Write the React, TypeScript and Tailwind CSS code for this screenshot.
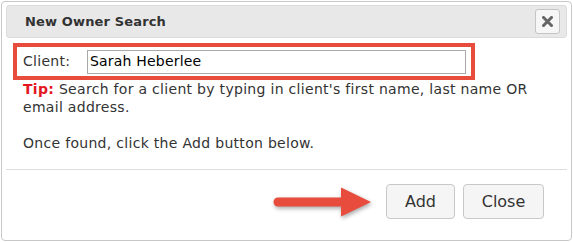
import React from "react";

export default function App() {
  return (
    <div
      className="w-[573px] h-[242px] bg-white p-[1px]"
      style={{ fontFamily: '"DejaVu Sans", Verdana, sans-serif' }}
    >
      <div className="h-[240px] border border-[#c8c8c8] rounded-[4px] flex flex-col pt-[3px] px-[4px] bg-white">
        {/* header */}
        <div className="h-[33px] shrink-0 bg-[#e8e8e8] border border-[#dcdcdc] rounded-[3px] flex items-center justify-between pl-[18px] pr-[6px]">
          <span className="text-[13px] font-bold text-[#333] tracking-[0.15px] pt-[1px]">New Owner Search</span>
          <button className="w-[25px] h-[25px] bg-[#f6f6f6] border border-[#c5c5c5] rounded-[3px] flex items-center justify-center">
            <svg width="11" height="11" viewBox="0 0 11 11">
              <path d="M1.5 1.5 L9.5 9.5 M9.5 1.5 L1.5 9.5" stroke="#666" strokeWidth="3" strokeLinecap="square" />
            </svg>
          </button>
        </div>

        {/* red highlighted row */}
        <div className="mt-[5px] ml-[7px] w-[462px] h-[37px] border-[4px] border-[#e84c3d] flex items-center pl-[6px] pr-[5px]">
          <span className="text-[14px] tracking-[0.3px] text-[#333] w-[64px]">Client:</span>
          <div className="flex-1 h-[24px] border border-[#a9a9a9] flex items-center px-[2px] text-[14px] tracking-[0.2px] text-black">
            Sarah Heberlee
          </div>
        </div>

        {/* tip text */}
        <div className="pl-[17px] pr-[22px] text-[14px] tracking-[0.3px] leading-[18px] text-[#333]">
          <p>
            <span className="font-bold text-[#e3171e]">Tip:</span> Search for a client by typing in client's first name, last name OR email address.
          </p>
          <p className="mt-[18px]">Once found, click the Add button below.</p>
        </div>

        <div className="mt-[17px] h-px bg-[#dddddd]" />

        {/* buttons */}
        <div className="mt-[14px] flex items-center justify-end pr-[23px]">
          <svg
            width="100"
            height="32"
            viewBox="0 0 100 32"
            className="mr-[13px] drop-shadow-[1px_2px_2px_rgba(0,0,0,0.35)]"
          >
            <line x1="5" y1="16" x2="72" y2="16" stroke="#e84c3d" strokeWidth="9" strokeLinecap="round" />
            <polygon points="68,1.5 98,16 68,30.5" fill="#e84c3d" />
          </svg>
          <button className="w-[69px] h-[35px] bg-[#f5f5f5] border border-[#c8c8c8] rounded-[4px] text-[16px] text-[#333]">
            Add
          </button>
          <button className="ml-[8px] w-[81px] h-[35px] bg-[#f5f5f5] border border-[#c8c8c8] rounded-[4px] text-[16px] text-[#333]">
            Close
          </button>
        </div>
      </div>
    </div>
  );
}
